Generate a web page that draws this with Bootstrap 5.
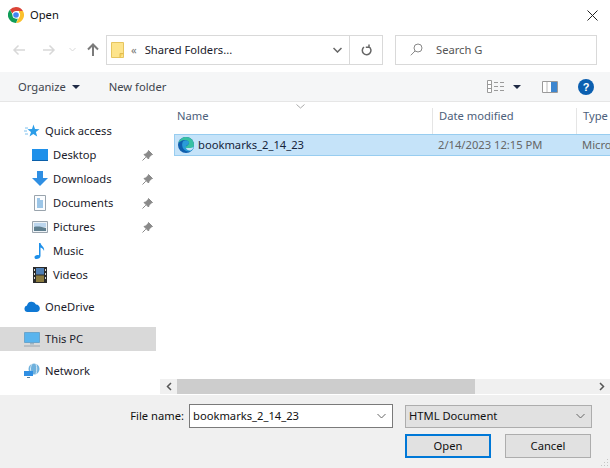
<!DOCTYPE html>
<html lang="en">
<head>
    <meta charset="UTF-8">
    <title>Open</title>
    <link href="https://cdn.jsdelivr.net/npm/bootstrap@5.3.0/dist/css/bootstrap.min.css" rel="stylesheet">
    <style>
        html, body { height: 100%; }
        body { font-family: "Noto Sans", "Open Sans", sans-serif; font-size: 11.2px; line-height: 16px; color: #1b1b2b; background: #fff; overflow: hidden; }
        .dlg { width: 610px; height: 468px; }
        .title-row { height: 30px; padding: 0 12px 0 8px; gap: 6px; }
        .title-row .ttl { color: #111; }
        .addr-row { height: 42px; padding: 5px 13px 8px 12px; }
        .nav-arrows { width: 94px; }
        .nav-arrows svg { display: block; flex: none; }
        .nav-back { margin-right: 16px; }
        .nav-fwd { margin-right: 13px; }
        .nav-drop { margin-right: 11px; }
        .addr-box { width: 277px; height: 30px; border: 1px solid #d9d9d9; }
        .addr-main { flex: 1; padding-left: 4px; gap: 7px; }
        .addr-main svg { flex: none; }
        .addr-chev { color: #777; margin-right: 1px; }
        .addr-end { width: 33px; border-left: 1px solid #d9d9d9; height: 100%; }
        .addr-drop { width: 24px; }
        .search-box { width: 202px; height: 30px; border: 1px solid #d9d9d9; margin-left: 12px; padding-left: 14px; gap: 13px; color: #555; }
        .tool-row { height: 30px; background: #f5f6f7; border-bottom: 1px solid #e6e6e6; padding: 0 16px 0 18px; color: #40444d; }
        .new-f { margin-left: 29px; }
        .caret-d { width: 0; height: 0; border-left: 4px solid transparent; border-right: 4px solid transparent; border-top: 4px solid #1f2a44; }
        .org-caret { margin-left: 6px; }
        .view-caret { margin-left: 9px; }
        .pane-ico { margin-left: 21px; }
        .help-ico { margin-left: 20px; }
        .main-area { height: 293px; }
        .side-col { width: 160px; padding-top: 17px; flex: none; }
        .side-item { height: 24px; padding-left: 24px; gap: 5px; width: 156px; color: #1b1b2b; }
        .side-item.sub { padding-left: 32px; }
        .side-item.sub .pin { margin-left: auto; margin-right: 3px; }
        .side-item .ico { width: 16px; height: 16px; flex: none; display: block; }
        .side-item.pick { background: #d9d9d9; }
        .gap-8 { margin-top: 8px; }
        .files { flex: 1; min-width: 0; position: relative; }
        .head-row { height: 32px; color: #4c607a; padding-top: 6px; position: relative; }
        .head-cell { height: 26px; padding-left: 6px; }
        .head-name { width: 272px; padding-left: 17px; }
        .head-date { width: 144px; border-left: 1px solid #e5e5e5; }
        .head-type { flex: 1; border-left: 1px solid #e5e5e5; white-space: nowrap; overflow: hidden; }
        .sort-mark { position: absolute; top: 2px; left: 136px; }
        .sel-row { margin-left: 14px; height: 22px; background: #c5e3f9; border: 1px solid #98cdf0; border-right: 0; color: #666; white-space: nowrap; overflow: hidden; }
        .sel-name { width: 263px; padding-left: 3px; gap: 4px; color: #15233b; flex: none; }
        .sel-name svg { flex: none; }
        .sel-date { width: 144px; flex: none; }
        .file-space { flex: 1; }
        .hbar { height: 15px; background: #f0f0f0; margin-bottom: 1px; }
        .hbar-arrow { width: 17px; }
        .hbar-thumb { width: 298px; height: 100%; background: #cdcdcd; }
        .foot-area { height: 73px; background: #f0f0f0; padding: 9px 19px 0 0; position: relative; }
        .foot-line { height: 24px; }
        .fname-label { width: 184px; text-align: right; color: #111; flex: none; }
        .fname-box { width: 204px; height: 24px; margin-left: 5px; background: #fff; border: 1px solid #7a7a7a; padding-left: 3px; color: #111; flex: none; }
        .type-box { width: 187px; height: 23px; margin-left: 12px; background: #e1e1e1; border: 1px solid #adadad; padding-left: 3px; color: #111; flex: none; }
        .end-caret { margin-left: auto; margin-right: 6px; }
        .foot-btns { justify-content: flex-end; gap: 14px; margin-top: 6px; }
        .win-btn { width: 86px; height: 24px; background: #e1e1e1; border: 1px solid #adadad; color: #111; }
        .win-btn.active-b { border: 2px solid #0078d7; }
        .grip { position: absolute; right: 1px; bottom: 1px; }
    </style>
</head>
<body>
<div class="dlg d-flex flex-column">

    <div class="title-row d-flex align-items-center">
        <svg width="16" height="16" viewBox="0 0 16 16">
            <path d="M8 0a8 8 0 0 1 6.930 4H8a4 4 0 0 0-3.700 2.500L1.900 2.800A8 8 0 0 1 8 0z" fill="#db4437"/>
            <path d="M14.930 4A8 8 0 0 1 8 16l3.460-6A4 4 0 0 0 11 5.200L10.900 4z" fill="#fbc02d"/>
            <path d="M1.900 2.800 5.400 8.900A4 4 0 0 0 9.900 11.600L8 16A8 8 0 0 1 1.900 2.800z" fill="#0f9d58"/>
            <circle cx="8" cy="8" r="3.600" fill="#fff"/>
            <circle cx="8" cy="8" r="2.800" fill="#4285f4"/>
        </svg>
        <span class="ttl">Open</span>
        <svg class="ms-auto" width="11" height="11" viewBox="0 0 11 11"><path d="M.5.5l10 10M10.500.5l-10 10" stroke="#222" stroke-width="1"/></svg>
    </div>

    <div class="addr-row d-flex align-items-center">
        <div class="nav-arrows d-flex align-items-center">
            <svg class="nav-back" width="14" height="12" viewBox="0 0 14 12"><path d="M13 6H2M6.500 1.500 2 6l4.500 4.500" fill="none" stroke="#d8d8d8" stroke-width="1.500"/></svg>
            <svg class="nav-fwd" width="14" height="12" viewBox="0 0 14 12"><path d="M1 6h11M7.500 1.500 12 6l-4.500 4.500" fill="none" stroke="#d8d8d8" stroke-width="1.500"/></svg>
            <svg class="nav-drop" width="7" height="5" viewBox="0 0 7 5"><path d="M.5 1l3 3 3-3" fill="none" stroke="#d8d8d8"/></svg>
            <svg width="12" height="13" viewBox="0 0 12 13"><path d="M6 13V2M1 6.500 6 1.500l5 5" fill="none" stroke="#7b7b7b" stroke-width="2"/></svg>
        </div>
        <div class="addr-box d-flex align-items-center">
            <div class="addr-main d-flex align-items-center">
                <svg width="13" height="16" viewBox="0 0 13 16"><path d="M.5.5h12v15H.5z" fill="#fde48c" stroke="#e6c55f"/><path d="M9 15.500v-4h3.500" fill="#fbd660" stroke="#e0bb52"/></svg>
                <span class="addr-chev">&laquo;</span>
                <span class="text-nowrap">Shared Folders...</span>
            </div>
            <div class="addr-drop d-flex justify-content-center">
                <svg width="9" height="6" viewBox="0 0 9 6"><path d="M.5 1l4 4 4-4" fill="none" stroke="#666" stroke-width="1.500"/></svg>
            </div>
            <div class="addr-end d-flex align-items-center justify-content-center">
                <svg width="11" height="12" viewBox="0 0 11 12"><path d="M7.800 2.700A4.300 4.300 0 1 1 3 3M8 .5v2.700H4.800" fill="none" stroke="#666" stroke-width="1.500"/></svg>
            </div>
        </div>
        <div class="search-box d-flex align-items-center">
            <svg width="13" height="13" viewBox="0 0 13 13"><circle cx="8" cy="5" r="4" fill="none" stroke="#888"/><path d="M5 8 .8 12.300" stroke="#888"/></svg>
            <span>Search G</span>
        </div>
    </div>

    <div class="tool-row d-flex align-items-center">
        <span>Organize</span>
        <span class="caret-d org-caret"></span>
        <span class="new-f">New folder</span>
        <svg class="ms-auto" width="17" height="13" viewBox="0 0 17 13"><path d="M.5.5h4v12h-4zM.5 4.500h4M.5 8.500h4" fill="#fff" stroke="#9a9a9a"/><path d="M7 2.500h4M13 2.500h4M7 6.500h4M13 6.500h4M7 10.500h4M13 10.500h4" stroke="#9a9a9a"/></svg>
        <span class="caret-d view-caret"></span>
        <svg class="pane-ico" width="16" height="12" viewBox="0 0 16 12"><path d="M.5.500h15v11H.5z" fill="#fff" stroke="#9a9a9a"/><path d="M9 1h6v10H9z" fill="#3d86cf"/><path d="M5 1v10" stroke="#bbb"/></svg>
        <svg class="help-ico" width="16" height="16" viewBox="0 0 16 16"><circle cx="8" cy="8" r="8" fill="#0b5fb0"/><text x="8" y="12" font-size="11" font-weight="700" text-anchor="middle" fill="#fff" font-family="Liberation Sans, sans-serif">?</text></svg>
    </div>

    <div class="main-area d-flex">
        <div class="side-col">
            <div class="side-item d-flex align-items-center">
                <svg class="ico" viewBox="0 0 16 16"><path d="M9.500 1.500 11 6l4.500.2-3.600 2.800 1.300 4.500L9.300 11l-3.800 2.500L7 9 3.500 6.200 8 6z" fill="#2b9de8"/><path d="M1 5h3M0 8h3M1 11h3" stroke="#7cc0ee"/></svg>
                <span>Quick access</span>
            </div>
            <div class="side-item sub d-flex align-items-center">
                <svg class="ico" viewBox="0 0 16 16"><path d="M0 2h16v11H0z" fill="#1e90ea"/><path d="M0 13h16v1H0z" fill="#0b5fa8"/></svg>
                <span>Desktop</span>
                <svg class="pin" width="11" height="11" viewBox="0 0 11 11"><path d="M6.500.5 10.500 4.500 9 5l-2 2.500-.5 1.500L2 4.500l1.500-.5L6 2z M3.800 7.200.5 10.500" fill="#8a8a8a" stroke="#8a8a8a"/></svg>
            </div>
            <div class="side-item sub d-flex align-items-center">
                <svg class="ico" viewBox="0 0 16 16"><path d="M5 0h6v7h5l-8 8-8-8h5z" fill="#2f8fe3"/></svg>
                <span>Downloads</span>
                <svg class="pin" width="11" height="11" viewBox="0 0 11 11"><path d="M6.500.5 10.500 4.500 9 5l-2 2.500-.5 1.500L2 4.500l1.500-.5L6 2z M3.800 7.200.5 10.500" fill="#8a8a8a" stroke="#8a8a8a"/></svg>
            </div>
            <div class="side-item sub d-flex align-items-center">
                <svg class="ico" viewBox="0 0 16 16"><path d="M2.500.5h11v15h-11z" fill="#fbfdff" stroke="#9aa4ad"/><path d="M5 4h3M5 6h6M5 8h6M5 10h6M5 12h6" stroke="#3f8fd0"/></svg>
                <span>Documents</span>
                <svg class="pin" width="11" height="11" viewBox="0 0 11 11"><path d="M6.500.5 10.500 4.500 9 5l-2 2.500-.5 1.500L2 4.500l1.500-.5L6 2z M3.800 7.200.5 10.500" fill="#8a8a8a" stroke="#8a8a8a"/></svg>
            </div>
            <div class="side-item sub d-flex align-items-center">
                <svg class="ico" viewBox="0 0 16 16"><path d="M.5 2.500h15v11H.5z" fill="#eef3f7" stroke="#9aa4ad"/><path d="M2 4h12v4H2z" fill="#bcd6ee"/><path d="M2 8c4-1 8 0 12 1v3H2z" fill="#5f7f8f"/></svg>
                <span>Pictures</span>
                <svg class="pin" width="11" height="11" viewBox="0 0 11 11"><path d="M6.500.5 10.500 4.500 9 5l-2 2.500-.5 1.500L2 4.500l1.500-.5L6 2z M3.800 7.200.5 10.500" fill="#8a8a8a" stroke="#8a8a8a"/></svg>
            </div>
            <div class="side-item sub d-flex align-items-center">
                <svg class="ico" viewBox="0 0 16 16"><path d="M7 0h1.500c.5 3 4.500 4 3.500 8-.5-2-2-3-3.500-3.500V13c0 2-2 3-4 3s-2.500-2-1.500-3 2.500-1.300 4-.8z" fill="#1e90ea"/></svg>
                <span>Music</span>
            </div>
            <div class="side-item sub d-flex align-items-center">
                <svg class="ico" viewBox="0 0 16 16"><path d="M1 0h14v16H1z" fill="#2a2a2a"/><path d="M4 1h8v6.500H4z" fill="#4f7fb5"/><path d="M4 8.500h8V15H4z" fill="#8a7a3f"/><path d="M2 2h1v2H2zM2 6h1v2H2zM2 10h1v2H2zM13 2h1v2h-1zM13 6h1v2h-1zM13 10h1v2h-1z" fill="#ddd"/></svg>
                <span>Videos</span>
            </div>
            <div class="side-item d-flex align-items-center gap-8">
                <svg class="ico" viewBox="0 0 16 16"><path d="M3.500 13a3.300 3.300 0 0 1-.5-6.500 4.800 4.800 0 0 1 9-1 3.800 3.800 0 0 1 3.800 4c0 2-1.300 3.500-3.300 3.500z" fill="#0f78d4"/></svg>
                <span>OneDrive</span>
            </div>
            <div class="side-item pick d-flex align-items-center gap-8">
                <svg class="ico" viewBox="0 0 16 16"><path d="M.5 1.500h15v10H.5z" fill="#59b4ee" stroke="#6aa5cc"/><path d="M6 12h4v1.500H6z" fill="#9fb4c2"/><path d="M0 15h16" stroke="#9aa4ad"/></svg>
                <span>This PC</span>
            </div>
            <div class="side-item d-flex align-items-center gap-8">
                <svg class="ico" viewBox="0 0 16 16"><circle cx="10" cy="6" r="5.500" fill="#6fb1dd"/><path d="M8 1c-2 3-2 7 0 10M12 1c1 3 1 7 0 10" stroke="#d5e9f6" fill="none"/><path d="M0 8h9v5H0z" fill="#2f8fe3"/><path d="M3 14h3v1H3z" fill="#5a7f9a"/></svg>
                <span>Network</span>
            </div>
        </div>

        <div class="files d-flex flex-column">
            <div class="head-row d-flex">
                <div class="head-cell head-name">Name</div>
                <div class="head-cell head-date">Date modified</div>
                <div class="head-cell head-type">Type</div>
                <svg class="sort-mark" width="9" height="5" viewBox="0 0 9 5"><path d="M.5.500l4 3.500 4-3.500" fill="none" stroke="#aaa"/></svg>
            </div>
            <div class="sel-row d-flex align-items-center">
                <div class="sel-name d-flex align-items-center">
                    <svg width="16" height="16" viewBox="0 0 16 16">
                        <circle cx="8" cy="8" r="8" fill="#0f5fae"/>
                        <path d="M5.500 4C3.500 6 3.800 10 6 12.500c2 2 5 2.700 8 1C15.300 12.300 16 11 16 9c-1 1-2 1-3 1H8c0-2 3-2 3-4.500C11 3.500 7.500 2.500 5.500 4z" fill="#2a9bd8"/>
                        <path d="M.4 6C1.500 2.500 4.500 0 8 0c4.500 0 8 3.500 8 8 0 1.800-1.500 3-3.500 3H7.500c0-2.500 3.500-2.500 3.500-5.200C11 3.800 8.500 2.800 6.500 3 4 3.200 1.800 4.500.4 6z" fill="#38c0a3"/>
                        <path d="M16 9.300c-.5 1.200-2 1.700-3.500 1.700H8c.4 2 3 3 5.200 2.300 1.400-1 2.500-2.500 2.800-4z" fill="#c5e3f9"/>
                    </svg>
                    <span>bookmarks_2_14_23</span>
                </div>
                <div class="sel-date">2/14/2023 12:15 PM</div>
                <div>Micro</div>
            </div>
            <div class="file-space"></div>
            <div class="hbar d-flex align-items-center">
                <div class="hbar-arrow d-flex justify-content-center"><svg width="6" height="9" viewBox="0 0 6 9"><path d="M5 1 1.500 4.500 5 8" fill="none" stroke="#555" stroke-width="1.500"/></svg></div>
                <div class="hbar-thumb"></div>
                <div class="hbar-arrow ms-auto d-flex justify-content-center"><svg width="6" height="9" viewBox="0 0 6 9"><path d="M1 1l3.500 3.500L1 8" fill="none" stroke="#555" stroke-width="1.500"/></svg></div>
            </div>
        </div>
    </div>

    <div class="foot-area flex-grow-1">
        <div class="foot-line d-flex align-items-center">
            <div class="fname-label">File name:</div>
            <div class="fname-box d-flex align-items-center">
                <span>bookmarks_2_14_23</span>
                <svg class="end-caret" width="9" height="6" viewBox="0 0 9 6"><path d="M.5 1l4 4 4-4" fill="none" stroke="#666"/></svg>
            </div>
            <div class="type-box d-flex align-items-center">
                <span>HTML Document</span>
                <svg class="end-caret" width="9" height="6" viewBox="0 0 9 6"><path d="M.5 1l4 4 4-4" fill="none" stroke="#666"/></svg>
            </div>
        </div>
        <div class="foot-btns d-flex">
            <div class="win-btn active-b d-flex align-items-center justify-content-center">Open</div>
            <div class="win-btn d-flex align-items-center justify-content-center">Cancel</div>
        </div>
        <svg class="grip" width="9" height="9" viewBox="0 0 9 9"><path d="M7 1h1v1H7zM4 4h1v1H4zM7 4h1v1H7zM1 7h1v1H1zM4 7h1v1H4zM7 7h1v1H7z" fill="#c4c4c4"/></svg>
    </div>
</div>
<script src="https://cdn.jsdelivr.net/npm/bootstrap@5.3.0/dist/js/bootstrap.bundle.min.js"></script>
</body>
</html>
